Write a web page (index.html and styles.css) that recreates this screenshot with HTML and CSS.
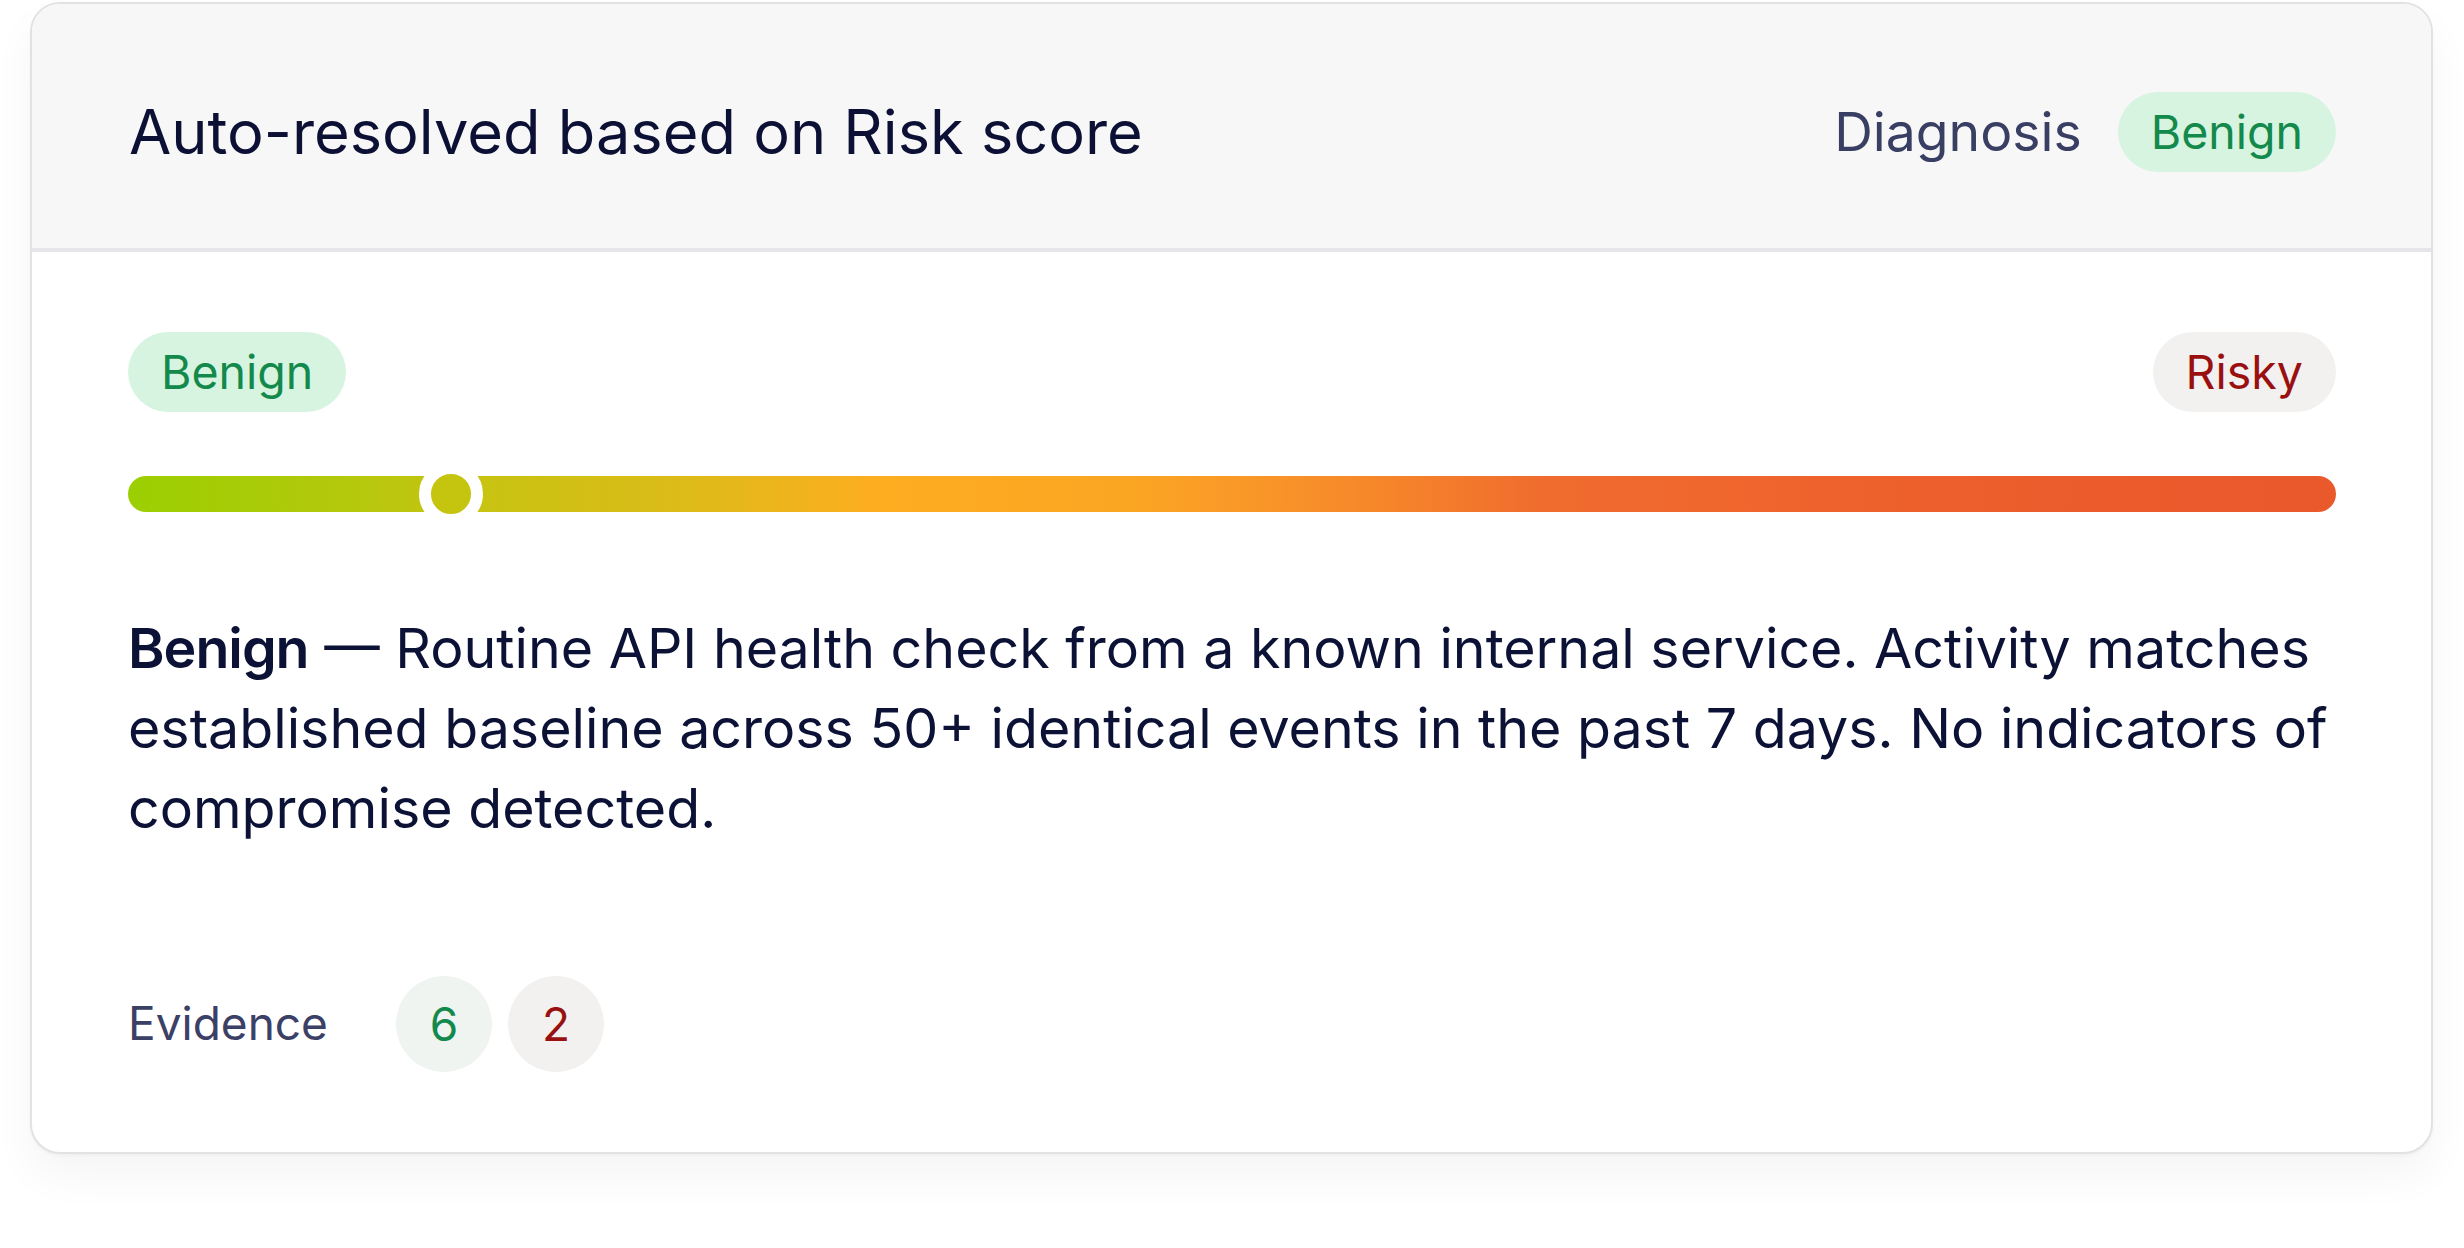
FILE: index.html
```html
<!DOCTYPE html>
<html lang="en">
<head>
<meta charset="utf-8">
<title>Auto-resolved based on Risk score</title>
<link rel="stylesheet" href="styles.css">
</head>
<body>
  <div class="card">
    <header class="card-head">
      <h1 class="title">Auto-resolved based on Risk score</h1>
      <div class="diag">
        <span class="diag-label">Diagnosis</span>
        <span class="pill pill-benign">Benign</span>
      </div>
    </header>
    <section class="card-body">
      <div class="scale-labels">
        <span class="pill pill-benign">Benign</span>
        <span class="pill pill-risky">Risky</span>
      </div>
      <div class="bar">
        <span class="knob" style="left: 14.63%"></span>
      </div>
      <p class="summary"><strong>Benign</strong> — Routine API health check from a known internal service. Activity matches established baseline across 50+ identical events in the past 7 days. No indicators of compromise detected.</p>
      <div class="evidence">
        <span class="evidence-label">Evidence</span>
        <span class="count count-benign">6</span>
        <span class="count count-risky">2</span>
      </div>
    </section>
  </div>
</body>
</html>
```
FILE: styles.css
```css
html, body {
  margin: 0;
  background: #ffffff;
}

body {
  padding: 2px 31px 80px 30px;
  font-family: Inter, "Noto Sans", "Liberation Sans", sans-serif;
  color: #0c1136;
}

.card {
  background: #ffffff;
  border: 2px solid #e2e2e4;
  border-radius: 30px;
  overflow: hidden;
  box-shadow: 0 22px 44px rgba(0, 0, 0, 0.045), 0 2px 3px rgba(0, 0, 0, 0.03);
}

.card-head {
  display: flex;
  align-items: center;
  justify-content: space-between;
  padding: 88px 95px 76px 97px;
  background: #f7f7f7;
  border-bottom: 4px solid #e5e5ea;
}

.title {
  margin: 0;
  font-size: 61.3px;
  font-weight: 400;
  line-height: 80px;
  color: #0b1034;
}

.diag {
  display: flex;
  align-items: center;
  gap: 36px;
}

.diag-label {
  font-size: 53.5px;
  line-height: 80px;
  color: #393e63;
}

.pill {
  display: inline-flex;
  align-items: center;
  justify-content: center;
  height: 80px;
  padding: 0 33px;
  border-radius: 40px;
  font-size: 46.5px;
  line-height: 1;
}

.pill-benign {
  background: #d7f4e1;
  color: #138a4c;
}

.pill-risky {
  background: #f2f1f0;
  color: #9a1010;
}

.card-body {
  padding: 80px 95px 80px 96px;
}

.scale-labels {
  display: flex;
  justify-content: space-between;
  align-items: center;
}

.bar {
  position: relative;
  margin-top: 64px;
  height: 36px;
  border-radius: 18px;
  background: linear-gradient(90deg,
    #9bcf02 0%,
    #b1c90b 9%,
    #c6c411 15%,
    #dcbb18 25%,
    #fdad20 34%,
    #fba623 45%,
    #f99728 51%,
    #f6852a 57%,
    #f06c2e 64%,
    #ee622d 78%,
    #eb5b2c 89%,
    #e9592b 100%);
}

.knob {
  position: absolute;
  top: 50%;
  width: 40px;
  height: 40px;
  border: 12px solid #ffffff;
  border-radius: 50%;
  background: #c5c40f;
  transform: translate(-50%, -50%);
}

.summary {
  margin: 96px 0 0;
  font-size: 55.5px;
  line-height: 80px;
  color: #0c1136;
}

.summary strong {
  font-weight: 600;
  letter-spacing: -1px;
}

.evidence {
  display: flex;
  align-items: center;
  margin-top: 128px;
}

.evidence-label {
  font-size: 46px;
  line-height: 1.2;
  color: #3b4066;
  margin-right: 68px;
}

.count {
  display: inline-flex;
  align-items: center;
  justify-content: center;
  width: 96px;
  height: 96px;
  border-radius: 50%;
  font-size: 46px;
  line-height: 1;
}

.count + .count {
  margin-left: 16px;
}

.count-benign {
  background: #eff4f0;
  color: #14894e;
}

.count-risky {
  background: #f2f1f0;
  color: #981010;
}
```
